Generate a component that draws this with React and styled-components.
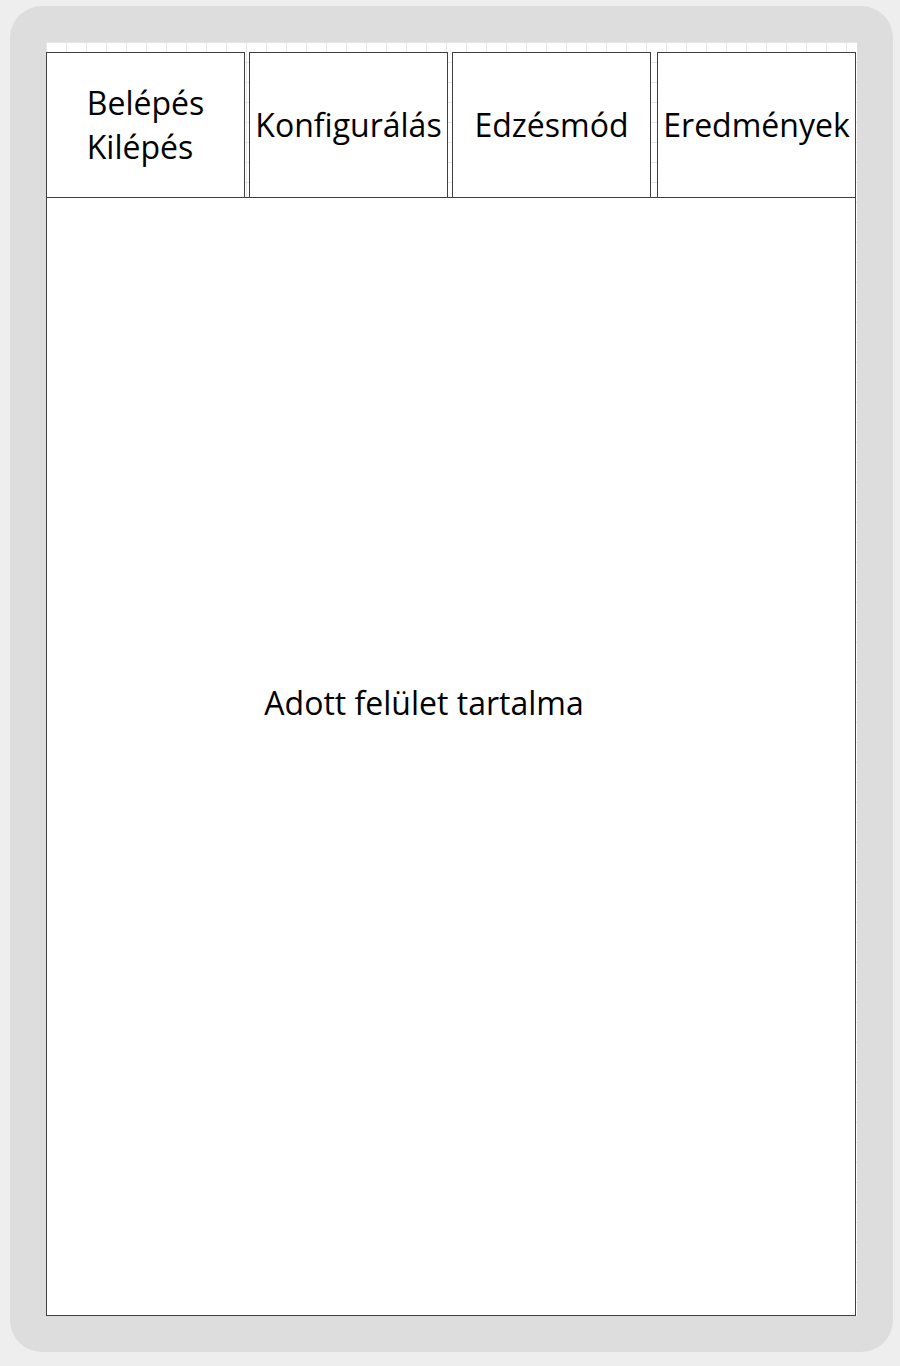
import React from "react";
import styled, { createGlobalStyle } from "styled-components";

const GlobalStyle = createGlobalStyle`
  html, body {
    margin: 0;
    padding: 0;
    background: #eeeeee;
  }
  body {
    font-family: "Open Sans", "Liberation Sans", sans-serif;
    color: #000;
  }
`;

const Frame = styled.div`
  margin: 6px 0 0 10px;
  width: 883px;
  box-sizing: border-box;
  padding: 36px;
  background: #dddddd;
  border-radius: 32px;
`;

const Canvas = styled.div`
  width: 811px;
  height: 1274px;
  box-sizing: border-box;
  padding-top: 10px;
  display: flex;
  flex-direction: column;
  background-color: #ffffff;
  background-image:
    linear-gradient(to right, #e6e6e6 1px, transparent 1px),
    linear-gradient(to bottom, #e6e6e6 1px, transparent 1px);
  background-size: 20px 20px;
  background-position: 0 0;
`;

const TabRow = styled.div`
  display: flex;
  width: 810px;
`;

const Tab = styled.div`
  width: 199px;
  height: 145px;
  box-sizing: border-box;
  margin-right: ${(p) => p.$gap || 0}px;
  border: 1px solid #404040;
  border-bottom: none;
  background: #ffffff;
  display: flex;
  align-items: center;
  justify-content: center;
`;

const TabLabel = styled.div`
  font-size: 32px;
  line-height: 44px;
  text-align: left;
  white-space: nowrap;
`;

const Content = styled.div`
  width: 810px;
  height: 1119px;
  box-sizing: border-box;
  border: 1px solid #404040;
  background: #ffffff;
  display: flex;
  justify-content: center;
  padding: 483px 54px 0 0;
`;

const ContentText = styled.div`
  font-size: 32px;
  line-height: normal;
  white-space: nowrap;
`;

const tabs = [
  { lines: ["Belépés", "Kilépés"], gap: 4 },
  { lines: ["Konfigurálás"], gap: 4 },
  { lines: ["Edzésmód"], gap: 6 },
  { lines: ["Eredmények"], gap: 0 },
];

export default function App() {
  return (
    <>
      <GlobalStyle />
      <Frame>
        <Canvas>
          <TabRow>
            {tabs.map((t, i) => (
              <Tab key={i} $gap={t.gap}>
                <TabLabel>
                  {t.lines.map((l, j) => (
                    <div key={j}>{l}</div>
                  ))}
                </TabLabel>
              </Tab>
            ))}
          </TabRow>
          <Content>
            <ContentText>Adott felület tartalma</ContentText>
          </Content>
        </Canvas>
      </Frame>
    </>
  );
}
